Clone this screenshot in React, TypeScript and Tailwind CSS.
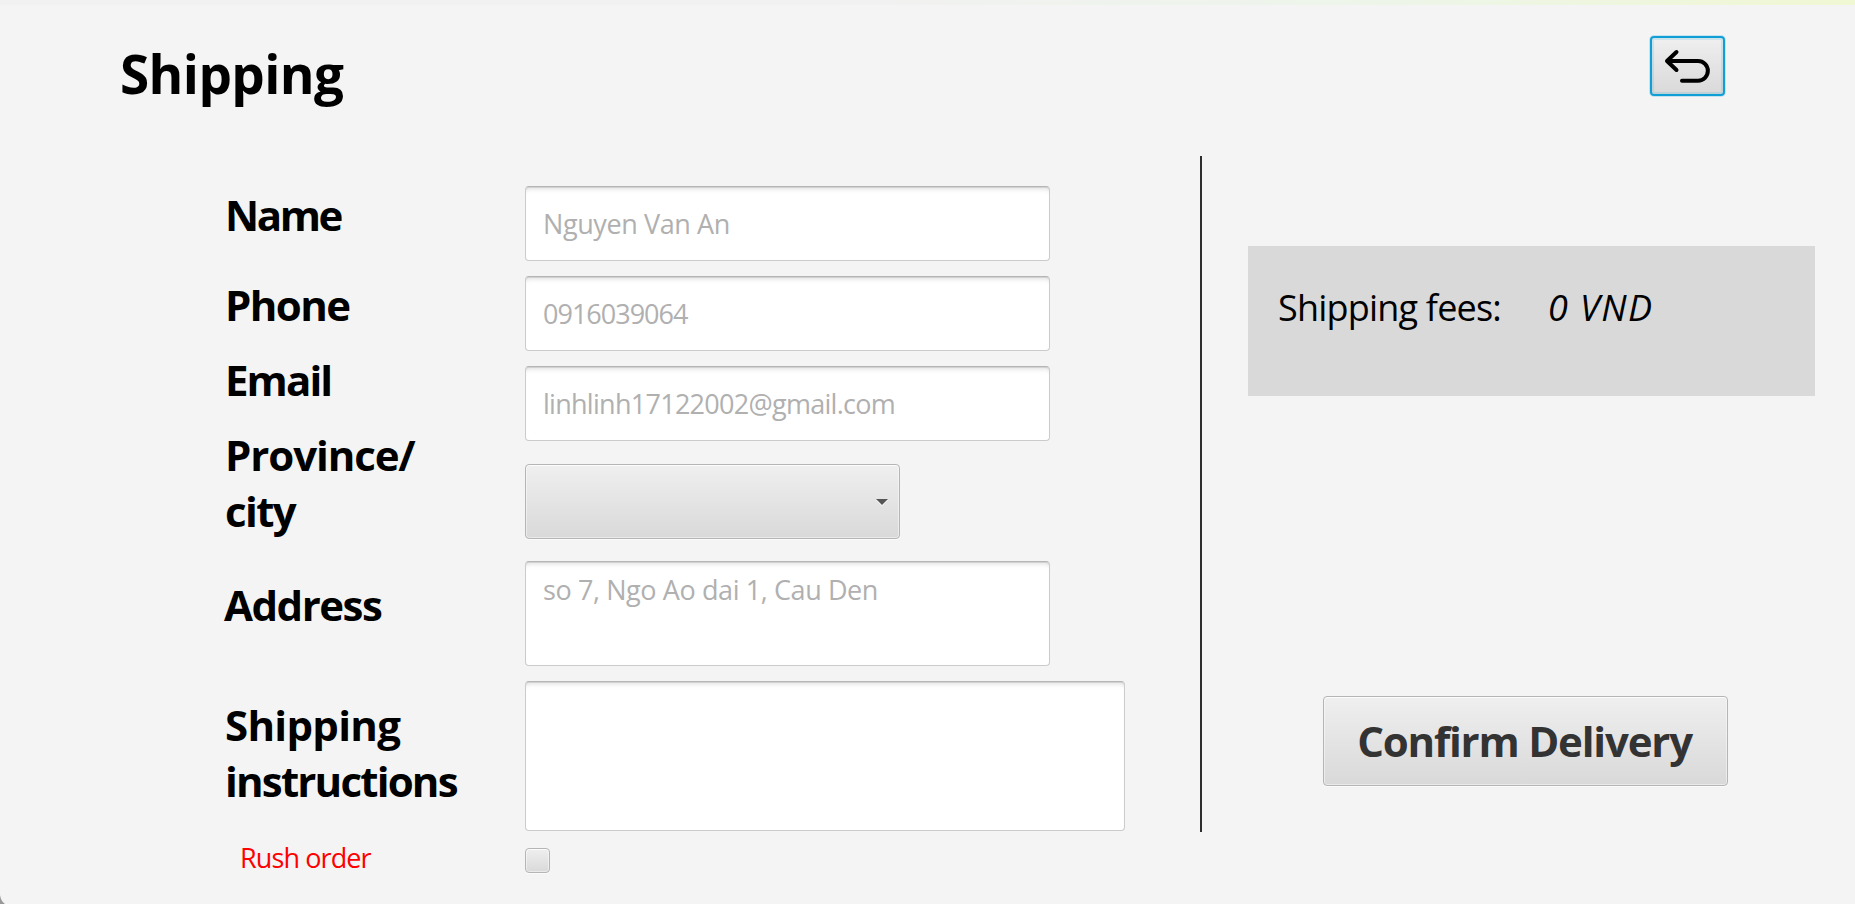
import React from "react";

const buttonFace =
  "rounded-[4px] border border-[#b5b5b5] bg-linear-to-b from-[#efefef] to-[#d9d9d9] shadow-[inset_0_0_0_1px_rgba(255,255,255,0.45),inset_0_1px_0_rgba(255,255,255,0.7),0_1px_0_rgba(255,255,255,0.6)]";

const fieldFace =
  "block resize-none rounded-[4px] border border-[#cbcbcb] border-t-[#b5b5b5] bg-white px-[17px] text-[27px] text-[#3c3c3c] shadow-[inset_0_1px_0_#d2d2d2,inset_0_6px_5px_-4px_rgba(0,0,0,0.13)] outline-none placeholder:text-[#b0b0b0] placeholder:opacity-100";

function Label({ className, children }: { className: string; children: React.ReactNode }) {
  return (
    <div className={`text-[42px] leading-[56px] font-bold whitespace-nowrap text-black ${className}`}>
      {children}
    </div>
  );
}

export default function App() {
  return (
    <div className="relative flex h-[904px] w-[1855px] flex-col overflow-hidden bg-[#f4f4f4] font-['Open_Sans','Noto_Sans',sans-serif]">
      <div className="h-[5px] w-full shrink-0 bg-linear-to-r from-[#f1f1f1] from-45% via-[#edf5e9] via-75% to-[#f0f7d3]" />
      <header className="flex h-[151px] shrink-0 items-start justify-between pr-[130px] pl-[120px]">
        <h1 className="mt-[33px] text-[53px] leading-[72px] font-bold tracking-[-0.6px] text-black">Shipping</h1>
        <button
          aria-label="Back"
          className="mt-[31px] flex h-[60px] w-[75px] items-center justify-center rounded-[4px] border-2 border-[#0f9ed5] bg-linear-to-b from-[#efefef] to-[#d9d9d9] shadow-[0_0_0_1px_rgba(15,158,213,0.2),inset_0_0_0_2px_rgba(15,158,213,0.14)]"
        >
          <svg width="48" height="36" viewBox="0 0 48 36" fill="none" stroke="#000" strokeWidth="4" strokeLinecap="round" strokeLinejoin="round">
            <path d="M12.500 4 3 13l9.500 9M3 13h31a9.800 9.800 0 0 1 0 19.700H18" />
          </svg>
        </button>
      </header>

      <main className="flex">
        <section className="flex h-[732px] w-[1200px] shrink-0 pl-[225px]">
          <div className="flex w-[300px] shrink-0 flex-col pt-[31px]">
            <Label className="tracking-[-2.4px]">Name</Label>
            <Label className="mt-[34px] tracking-[-1.6px]">Phone</Label>
            <Label className="mt-[19px] tracking-[-1.9px]">Email</Label>
            <Label className="mt-[19px] tracking-[-1.1px]">
              Province/
              <br />
              <span className="tracking-[-1.6px]">city</span>
            </Label>
            <Label className="mt-[38px] -ml-px tracking-[-1.5px]">Address</Label>
            <Label className="mt-[64px] tracking-[-0.7px]">
              Shipping
              <br />
              <span className="tracking-[-1.8px]">instructions</span>
            </Label>
            <div className="mt-[31px] pl-[15px] text-[27px] leading-[36px] tracking-[-0.9px] text-[#ff0000]">Rush order</div>
          </div>
          <div className="flex flex-col items-start pt-[30px]">
            <input className={`${fieldFace} h-[75px] w-[525px] tracking-[-0.4px]`} placeholder="Nguyen Van An" />
            <input className={`${fieldFace} mt-[15px] h-[75px] w-[525px] tracking-[-1px]`} placeholder="0916039064" />
            <input className={`${fieldFace} mt-[15px] h-[75px] w-[525px] tracking-[-0.72px]`} placeholder="linhlinh17122002@gmail.com" />
            <button aria-label="Province or city" className={`${buttonFace} mt-[23px] flex h-[75px] w-[375px] items-center justify-end pr-[11px]`}>
              <svg width="12" height="8" viewBox="0 0 12 8">
                <path d="M0 2h12L6 8z" fill="#fff" />
                <path d="M0 1h12L6 7z" fill="#555" />
              </svg>
            </button>
            <textarea className={`${fieldFace} mt-[22px] h-[105px] w-[525px] pt-[10px] leading-[36px] tracking-[-0.4px]`} placeholder="so 7, Ngo Ao dai 1, Cau Den" />
            <textarea className={`${fieldFace} mt-[15px] h-[150px] w-[600px]`} />
            <button role="checkbox" aria-checked="false" aria-label="Rush order" className={`${buttonFace} mt-[17px] h-[25px] w-[25px]`} />
          </div>
        </section>

        <div className="h-[676px] w-[2px] shrink-0 bg-[#2e2e2e]" />

        <aside className="flex flex-col pl-[46px]">
          <div className="mt-[90px] flex h-[150px] w-[567px] items-start bg-[#d9d9d9] pt-[38px] pl-[30px] text-[36px] leading-[48px] whitespace-nowrap text-black">
            <span className="w-[270px] tracking-[-0.8px]">Shipping fees:</span>
            <span className="tracking-[1.4px] italic">0 VND</span>
          </div>
          <button className={`${buttonFace} mt-[300px] ml-[75px] h-[90px] w-[405px] pr-[2px] text-[42px] leading-[56px] font-bold tracking-[-1.2px] whitespace-nowrap text-[#333]`}>
            Confirm Delivery
          </button>
        </aside>
      </main>

      <svg className="absolute bottom-0 left-0" width="5" height="9" viewBox="0 0 5 9">
        <path d="M0 0C.6 4 2 7 5 9H0z" fill="#999" />
      </svg>
    </div>
  );
}
